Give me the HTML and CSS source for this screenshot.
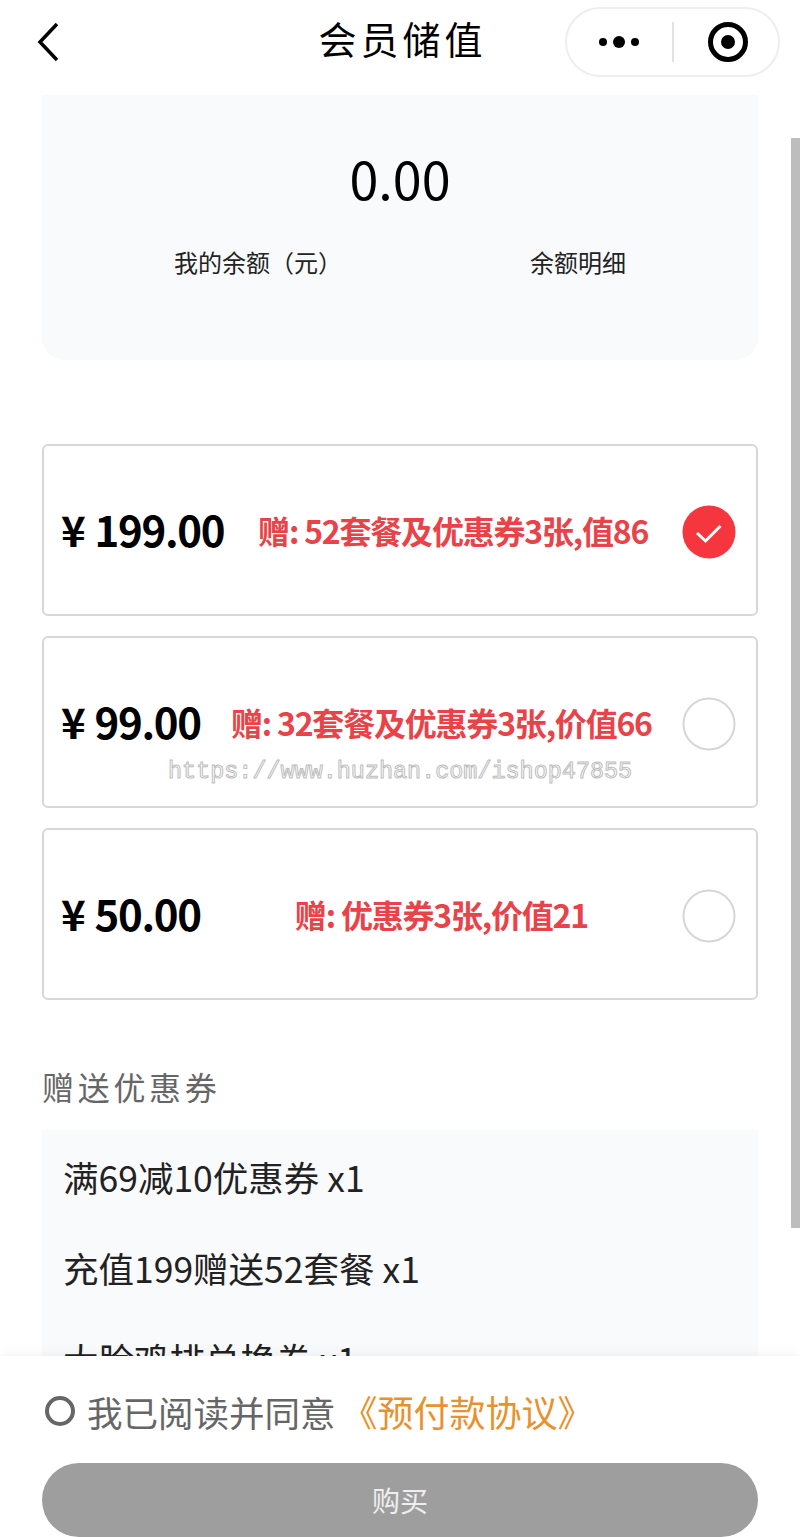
FILE: index.html
```html
<!DOCTYPE html>
<html lang="zh-CN">
<head>
    <meta charset="UTF-8">
    <meta name="viewport" content="width=device-width, initial-scale=1.0">
    <title>会员储值</title>
    <link rel="stylesheet" href="styles.css">
</head>
<body>
    <div class="app">
        <header class="nav">
            <svg class="nav-back" width="24" height="44" viewBox="0 0 24 44">
                <path d="M20 4 L3 22 L20 40" fill="none" stroke="#000" stroke-width="3.5"/>
            </svg>
            <h1 class="nav-title">会员储值</h1>
            <div class="capsule">
                <svg class="capsule-dots" width="42" height="12" viewBox="0 0 42 12">
                    <circle cx="5" cy="6" r="4" fill="#000"/>
                    <circle cx="21" cy="6" r="6" fill="#000"/>
                    <circle cx="37" cy="6" r="4" fill="#000"/>
                </svg>
                <span class="capsule-line"></span>
                <svg class="capsule-target" width="42" height="42" viewBox="0 0 42 42">
                    <circle cx="21" cy="21" r="17.5" fill="none" stroke="#000" stroke-width="5"/>
                    <circle cx="21" cy="21" r="7" fill="#000"/>
                </svg>
            </div>
        </header>

        <main class="content">
            <section class="balance">
                <div class="balance-num">0.00</div>
                <div class="balance-row">
                    <span>我的余额（元）</span>
                    <span>余额明细</span>
                </div>
            </section>

            <section class="options">
                <div class="option">
                    <div class="price"><span class="yen">¥</span>199.00</div>
                    <div class="gift">赠: 52套餐及优惠券3张,值86</div>
                    <svg class="radio" width="54" height="54" viewBox="0 0 54 54">
                        <circle cx="27" cy="27" r="26.5" fill="#f5363f"/>
                        <path d="M15 28 L23.5 36 L38.5 21" fill="none" stroke="#fff" stroke-width="3"/>
                    </svg>
                </div>
                <div class="option">
                    <div class="price"><span class="yen">¥</span>99.00</div>
                    <div class="gift">赠: 32套餐及优惠券3张,价值66</div>
                    <svg class="radio" width="54" height="54" viewBox="0 0 54 54">
                        <circle cx="27" cy="27" r="25.5" fill="#fff" stroke="#d6d6d6" stroke-width="2"/>
                    </svg>
                </div>
                <div class="option">
                    <div class="price"><span class="yen">¥</span>50.00</div>
                    <div class="gift">赠: 优惠券3张,价值21</div>
                    <svg class="radio" width="54" height="54" viewBox="0 0 54 54">
                        <circle cx="27" cy="27" r="25.5" fill="#fff" stroke="#d6d6d6" stroke-width="2"/>
                    </svg>
                </div>
            </section>

            <h2 class="coupon-title">赠送优惠券</h2>
            <ul class="coupons">
                <li>满69减10优惠券 x1</li>
                <li>充值199赠送52套餐 x1</li>
                <li>大脸鸡排兑换券 x1</li>
            </ul>
        </main>

        <footer class="bottom">
            <div class="agree">
                <span class="agree-circle"></span>
                <span class="agree-text">我已阅读并同意</span>
                <span class="agree-link">《预付款协议》</span>
            </div>
            <button class="buy">购买</button>
        </footer>

        <div class="scrollbar"></div>
        <div class="watermark">https://www.huzhan.com/ishop47855</div>
    </div>
</body>
</html>
```

FILE: styles.css
```css
* {
    box-sizing: border-box;
}

html, body {
    margin: 0;
    padding: 0;
}

body {
    font-family: "Noto Sans CJK SC", "Noto Sans", sans-serif;
    color: #000;
    background: #fff;
}

.app {
    position: relative;
    display: flex;
    flex-direction: column;
    width: 800px;
    height: 1537px;
    overflow: hidden;
}

/* top bar */
.nav {
    position: relative;
    flex: none;
    display: flex;
    align-items: center;
    justify-content: space-between;
    height: 95px;
    padding: 0 20px 11px 37px;
}

.nav-title {
    position: absolute;
    left: 5px;
    right: 0;
    top: 11px;
    margin: 0;
    font-size: 38px;
    line-height: 54px;
    font-weight: 400;
    letter-spacing: 4px;
    text-align: center;
}

.capsule {
    display: flex;
    align-items: center;
    width: 215px;
    height: 70px;
    border: 2px solid #eeeeee;
    border-radius: 35px;
    padding-left: 31px;
}

.capsule-line {
    width: 2px;
    height: 40px;
    margin: 0 33px 0 32px;
    background: #e2e2e2;
}

/* balance card */
.content {
    flex: 1;
    min-height: 0;
    overflow: hidden;
    padding: 0 42px;
}

.balance {
    height: 265px;
    padding-top: 46px;
    background: #f9fafc;
    border-radius: 0 0 22px 22px;
}

.balance-num {
    font-size: 52px;
    line-height: 74px;
    text-align: center;
}

.balance-row {
    display: flex;
    justify-content: space-between;
    margin-top: 29px;
    padding: 0 132px;
    font-size: 24px;
    line-height: 36px;
    color: #222;
}

/* recharge options */
.options {
    display: flex;
    flex-direction: column;
    gap: 20px;
    margin-top: 84px;
}

.option {
    display: flex;
    align-items: center;
    height: 172px;
    padding: 0 20px 0 17px;
    border: 2px solid #d6d7db;
    border-radius: 6px;
}

.price {
    margin-bottom: 4px;
    font-size: 42px;
    font-weight: 700;
    letter-spacing: -1.3px;
    white-space: nowrap;
}

.yen {
    margin-right: 10px;
}

.gift {
    flex: 1;
    font-size: 32px;
    font-weight: 700;
    letter-spacing: -1.2px;
    color: #e9434a;
    text-align: center;
    white-space: nowrap;
}

.radio {
    flex: none;
    margin-top: 4px;
}

/* coupons */
.coupon-title {
    margin: 64px 0 0;
    font-size: 32px;
    line-height: 44px;
    font-weight: 400;
    letter-spacing: 3.7px;
    color: #666;
}

.coupons {
    list-style: none;
    margin: 22px 0 0;
    padding: 0;
}

.coupons li {
    height: 91px;
    padding: 0 21px;
    font-size: 35.5px;
    line-height: 94px;
    color: #222;
    background: #f9fafc;
}

/* fixed bottom */
.bottom {
    flex: none;
    height: 181px;
    padding: 33px 42px 0;
    background: #fff;
    box-shadow: 0 -4px 10px rgba(0, 0, 0, 0.04);
    z-index: 1;
}

.agree {
    display: flex;
    align-items: center;
    height: 44px;
    padding-left: 3px;
}

.agree-circle {
    width: 30px;
    height: 30px;
    border: 4px solid #666;
    border-radius: 50%;
}

.agree-text {
    margin-left: 12px;
    font-size: 35.5px;
    color: #666;
}

.agree-link {
    margin-left: 6px;
    font-size: 36px;
    color: #e8912d;
}

.buy {
    display: block;
    width: 100%;
    height: 74px;
    margin-top: 30px;
    border: 0;
    border-radius: 37px;
    font-family: inherit;
    font-size: 28px;
    color: #eeeeee;
    background: #9e9e9e;
}

/* things lying over the page */
.scrollbar {
    position: absolute;
    left: 791px;
    top: 138px;
    width: 9px;
    height: 1090px;
    background: #bdbdbd;
}

.watermark {
    position: absolute;
    left: 168px;
    top: 758px;
    font-family: "Liberation Mono", monospace;
    font-size: 23.45px;
    line-height: 28px;
    white-space: nowrap;
    color: #fff;
    -webkit-text-stroke: 1px #bdbdbd;
}
```
